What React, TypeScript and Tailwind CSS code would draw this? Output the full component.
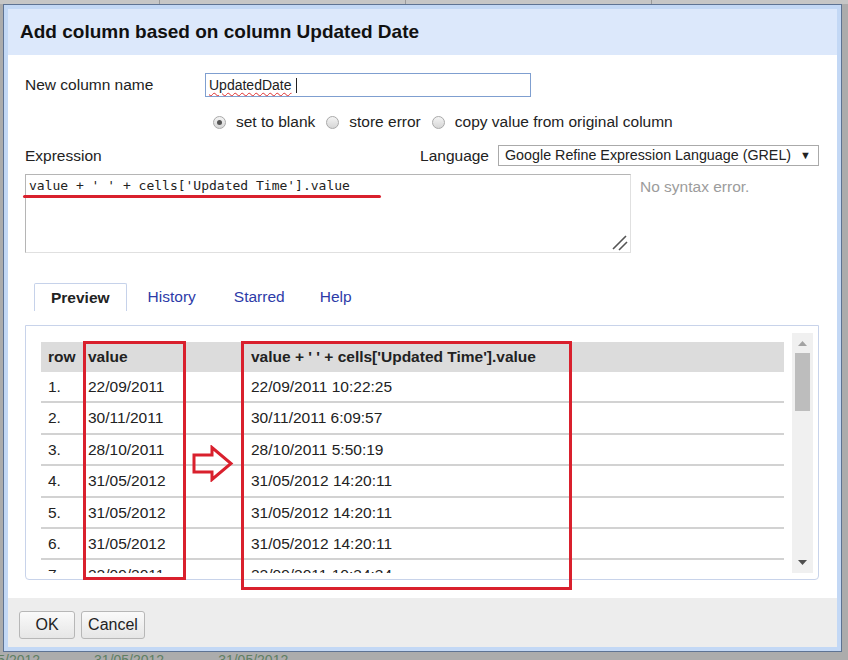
import React from "react";

const rows = [
  ["1.", "22/09/2011", "22/09/2011 10:22:25"],
  ["2.", "30/11/2011", "30/11/2011 6:09:57"],
  ["3.", "28/10/2011", "28/10/2011 5:50:19"],
  ["4.", "31/05/2012", "31/05/2012 14:20:11"],
  ["5.", "31/05/2012", "31/05/2012 14:20:11"],
  ["6.", "31/05/2012", "31/05/2012 14:20:11"],
  ["7.", "22/09/2011", "22/09/2011 10:34:34"],
];

const Radio = ({ checked }: { checked?: boolean }) => (
  <span className="w-[13px] h-[13px] rounded-full border border-[#a9a9a9] bg-gradient-to-b from-[#f4f4f4] to-[#d6d6d6] flex items-center justify-center shrink-0">
    {checked && <span className="w-[5px] h-[5px] rounded-full bg-[#555]"></span>}
  </span>
);

const App: React.FC = () => {
  return (
    <div className="relative w-[848px] h-[660px] overflow-hidden bg-[#acacac] font-['Liberation_Sans',Arial,sans-serif] text-[15.5px] text-[#222]">
      {/* sheet behind the dialog */}
      <div className="h-[4px] bg-[#c6c6c6] flex">
        <div className="w-[160px] border-r border-[#9a9a9a]"></div>
        <div className="w-[246px] border-r border-[#9a9a9a]"></div>
        <div className="w-[246px] border-r border-[#9a9a9a]"></div>
      </div>

      <div className="ml-[3px] w-[839px] h-[648px] border border-[#5e7393] bg-[#c3d8f5] p-[4px]">
        <div className="h-full bg-white flex flex-col">
          <div className="h-[46px] shrink-0 bg-[#dce8fb] pl-[12px] flex items-center">
            <h1 className="text-[19px] font-bold text-[#111]">Add column based on column Updated Date</h1>
          </div>

          <div className="h-[543px] shrink-0 pl-[17px] pr-[18px] pt-[18px] flex flex-col">
            <div className="h-[24px] flex items-center">
              <span className="w-[180px]">New column name</span>
              <div className="w-[326px] h-[24px] border border-[#7f9fd0] flex items-center pl-[3px] text-[14px]">
                <span className="underline decoration-wavy decoration-[#e03030] decoration-1 underline-offset-2">UpdatedDate</span>
                <span className="ml-[4px] w-px h-[15px] bg-[#222]"></span>
              </div>
            </div>

            <div className="h-[20px] mt-[15px] flex items-center ml-[188px]">
              <Radio checked />
              <span className="ml-[10px]">set to blank</span>
              <span className="ml-[11px]"><Radio /></span>
              <span className="ml-[10px]">store error</span>
              <span className="ml-[11px]"><Radio /></span>
              <span className="ml-[10px]">copy value from original column</span>
            </div>

            <div className="h-[21px] mt-[13px] flex items-center justify-between">
              <span>Expression</span>
              <div className="flex items-center gap-[9px]">
                <span>Language</span>
                <div className="w-[321px] h-[21px] border border-[#aaa] flex items-center justify-between pl-[6px] pr-[7px] whitespace-nowrap overflow-hidden">
                  <span className="text-[14.3px]">Google Refine Expression Language (GREL)</span>
                  <span className="text-[11px]">▼</span>
                </div>
              </div>
            </div>

            <div className="mt-[8px] flex">
              <div className="relative w-[606px] h-[79px] border border-[#b5b5b5] border-r-[#e0e0e0] border-b-[#e0e0e0] pl-[3px] pt-[3px] font-['DejaVu_Sans_Mono',monospace] text-[13px] leading-[16px] text-[#222]">
                value + ' ' + cells['Updated Time'].value
                <svg className="absolute right-[2px] bottom-[1px]" width="18" height="18" viewBox="0 0 18 18">
                  <path d="M3 16 L16 3 M9 17 L17 9" stroke="#555" strokeWidth="1.6" fill="none" />
                </svg>
              </div>
              <span className="ml-[9px] mt-[1px] text-[#9c9c9c]">No syntax error.</span>
            </div>

            <div className="mt-[30px] h-[28px] flex ml-[9px] gap-[4px]">
              <div className="px-[16px] h-[28px] border border-b-0 border-[#c6d2ea] rounded-t-[2px] flex items-center font-bold text-[#222]">Preview</div>
              <div className="px-[17px] h-[28px] flex items-center text-[#2d3ba8]">History</div>
              <div className="px-[17px] h-[28px] flex items-center text-[#2d3ba8]">Starred</div>
              <div className="px-[14px] h-[28px] flex items-center text-[#2d3ba8]">Help</div>
            </div>

            <div className="mt-[14px] h-[255px] border border-[#c8d3ea] rounded-b-[4px] pt-[7px] pb-[6px] pl-[15px] pr-[5px] flex">
              <div className="flex-1 overflow-hidden pt-[9px]">
                <div className="w-[743px]">
                  <div className="grid grid-cols-[40px_163px_540px] h-[30px] bg-[#dcdcdc] font-bold items-center">
                    <span className="pl-[7px]">row</span>
                    <span className="pl-[7px]">value</span>
                    <span className="pl-[7px]">value + ' ' + cells['Updated Time'].value</span>
                  </div>
                  {rows.map((r) => (
                    <div key={r[0]} className="grid grid-cols-[40px_163px_540px] h-[31.4px] border-b-2 border-[#d2d2d2] items-center">
                      <span className="pl-[7px]">{r[0]}</span>
                      <span className="pl-[7px]">{r[1]}</span>
                      <span className="pl-[7px]">{r[2]}</span>
                    </div>
                  ))}
                </div>
              </div>
              <div className="w-[21px] bg-[#f0f0f0] flex flex-col items-center shrink-0">
                <div className="h-[20px] flex items-center justify-center">
                  <svg width="9" height="5" viewBox="0 0 9 5"><path d="M0 5 L4.5 0 L9 5 Z" fill="#a3a3a3" /></svg>
                </div>
                <div className="w-[15px] h-[58px] bg-[#bdbdbd]"></div>
                <div className="flex-1"></div>
                <div className="h-[22px] flex items-center justify-center">
                  <svg width="9" height="5" viewBox="0 0 9 5"><path d="M0 0 L9 0 L4.5 5 Z" fill="#4f4f4f" /></svg>
                </div>
              </div>
            </div>
          </div>

          <div className="flex-1 bg-[#ededed] pl-[11px] pt-[13px] flex gap-[6px]">
            <button className="w-[56px] h-[28px] border border-[#b7b7b7] rounded-[3px] bg-gradient-to-b from-[#fafafa] to-[#e6e6e6] text-[16px] text-[#222]">OK</button>
            <button className="w-[64px] h-[28px] border border-[#b7b7b7] rounded-[3px] bg-gradient-to-b from-[#fafafa] to-[#e6e6e6] text-[16px] text-[#222]">Cancel</button>
          </div>
        </div>
      </div>

      <div className="flex text-[14px] leading-[14px] text-[#5f7f63] mt-[1px]">
        <span className="ml-[-30px]">31/05/2012</span>
        <span className="ml-[54px]">31/05/2012</span>
        <span className="ml-[54px]">31/05/2012</span>
      </div>

      {/* annotations */}
      <div className="absolute left-[23px] top-[195px] w-[358px] h-[3px] rounded-full bg-[#d9202d]"></div>
      <div className="absolute left-[83px] top-[341px] w-[103px] h-[239px] border-[3px] border-[#d9202d]"></div>
      <div className="absolute left-[241px] top-[341px] w-[331px] h-[249px] border-[3px] border-[#d9202d]"></div>
      <svg className="absolute left-[192px] top-[445px]" width="42" height="37" viewBox="0 0 42 37">
        <path d="M2 10 L20 10 L20 2.5 L39 18.5 L20 34.5 L20 27 L2 27 Z" fill="none" stroke="#d9202d" strokeWidth="3" strokeLinejoin="miter" />
      </svg>
    </div>
  );
};

export default App;
